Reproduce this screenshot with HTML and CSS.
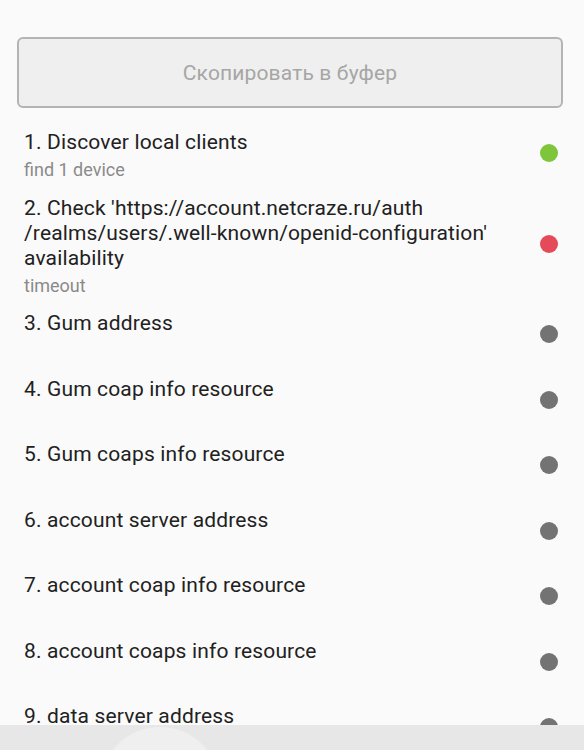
FILE: index.html
```html
<!DOCTYPE html>
<html lang="ru">
<head>
    <meta charset="UTF-8">
    <meta name="viewport" content="width=device-width, initial-scale=1.0">
    <title>Diagnostics</title>
    <link rel="stylesheet" href="styles.css">
</head>
<body>

    <div class="screen">
        <!-- Copy results button -->
        <button class="copy-button">Скопировать в буфер</button>

        <!-- Diagnostic steps -->
        <div class="steps">
            <div class="step">
                <div class="step-text">
                    <div class="step-title">1. Discover local clients</div>
                    <div class="step-note">find 1 device</div>
                </div>
                <span class="status ok"></span>
            </div>
            <div class="step">
                <div class="step-text">
                    <div class="step-title">2. Check 'https://account.netcraze.ru/auth<br>/realms/users/.well-known/openid-configuration'<br>availability</div>
                    <div class="step-note">timeout</div>
                </div>
                <span class="status fail"></span>
            </div>
            <div class="step">
                <div class="step-text">
                    <div class="step-title">3. Gum address</div>
                    <div class="step-note"></div>
                </div>
                <span class="status"></span>
            </div>
            <div class="step">
                <div class="step-text">
                    <div class="step-title">4. Gum coap info resource</div>
                    <div class="step-note"></div>
                </div>
                <span class="status"></span>
            </div>
            <div class="step">
                <div class="step-text">
                    <div class="step-title">5. Gum coaps info resource</div>
                    <div class="step-note"></div>
                </div>
                <span class="status"></span>
            </div>
            <div class="step">
                <div class="step-text">
                    <div class="step-title">6. account server address</div>
                    <div class="step-note"></div>
                </div>
                <span class="status"></span>
            </div>
            <div class="step">
                <div class="step-text">
                    <div class="step-title">7. account coap info resource</div>
                    <div class="step-note"></div>
                </div>
                <span class="status"></span>
            </div>
            <div class="step">
                <div class="step-text">
                    <div class="step-title">8. account coaps info resource</div>
                    <div class="step-note"></div>
                </div>
                <span class="status"></span>
            </div>
            <div class="step">
                <div class="step-text">
                    <div class="step-title">9. data server address</div>
                    <div class="step-note"></div>
                </div>
                <span class="status"></span>
            </div>
        </div>

        <!-- Bottom navigation strip -->
        <div class="bottom-bar">
            <div class="bottom-bubble"></div>
        </div>
    </div>

</body>
</html>
```

FILE: styles.css
```css
/* Page base */
body {
    margin: 0;
    background-color: #fafafa;
    font-family: Roboto, "Noto Sans", sans-serif;
}

/* Full screen column */
.screen {
    display: flex;
    flex-direction: column;
    height: 750px;
    overflow: hidden;
}

/* Copy to clipboard button */
.copy-button {
    margin: 37px 21px 0 17px;
    height: 71px;
    background-color: #efefef;
    border: 2px solid #b4b4b4;
    border-radius: 6px;
    color: #a6a6a6;
    font-family: Roboto, "Noto Sans", sans-serif;
    font-size: 21px;
    letter-spacing: 0.15px;
    flex-shrink: 0;
}

/* Steps list */
.steps {
    flex: 1;
    overflow: hidden;
    padding-top: 12.5px;
}

.step {
    display: flex;
    align-items: center;
    padding: 9.5px 26px 5px 24px;
}

.step-text {
    flex: 1;
}

.step-title {
    font-size: 21px;
    line-height: 25px;
    letter-spacing: 0.15px;
    color: #212121;
}

.step-note {
    height: 23px;
    margin-top: 3px;
    font-size: 18px;
    line-height: 23px;
    color: #8a8a8a;
}

/* Status dots */
.status {
    width: 18px;
    height: 18px;
    margin-bottom: 5px;
    border-radius: 50%;
    background-color: #737373;
}

.status.ok {
    background-color: #7dc63c;
}

.status.fail {
    background-color: #e54a5a;
}

/* Bottom strip */
.bottom-bar {
    height: 25px;
    flex-shrink: 0;
    background-color: #e7e7e7;
    overflow: hidden;
}

.bottom-bubble {
    width: 120px;
    height: 120px;
    margin: 2px 0 0 100px;
    border-radius: 50%;
    background-color: #efefef;
}
```
